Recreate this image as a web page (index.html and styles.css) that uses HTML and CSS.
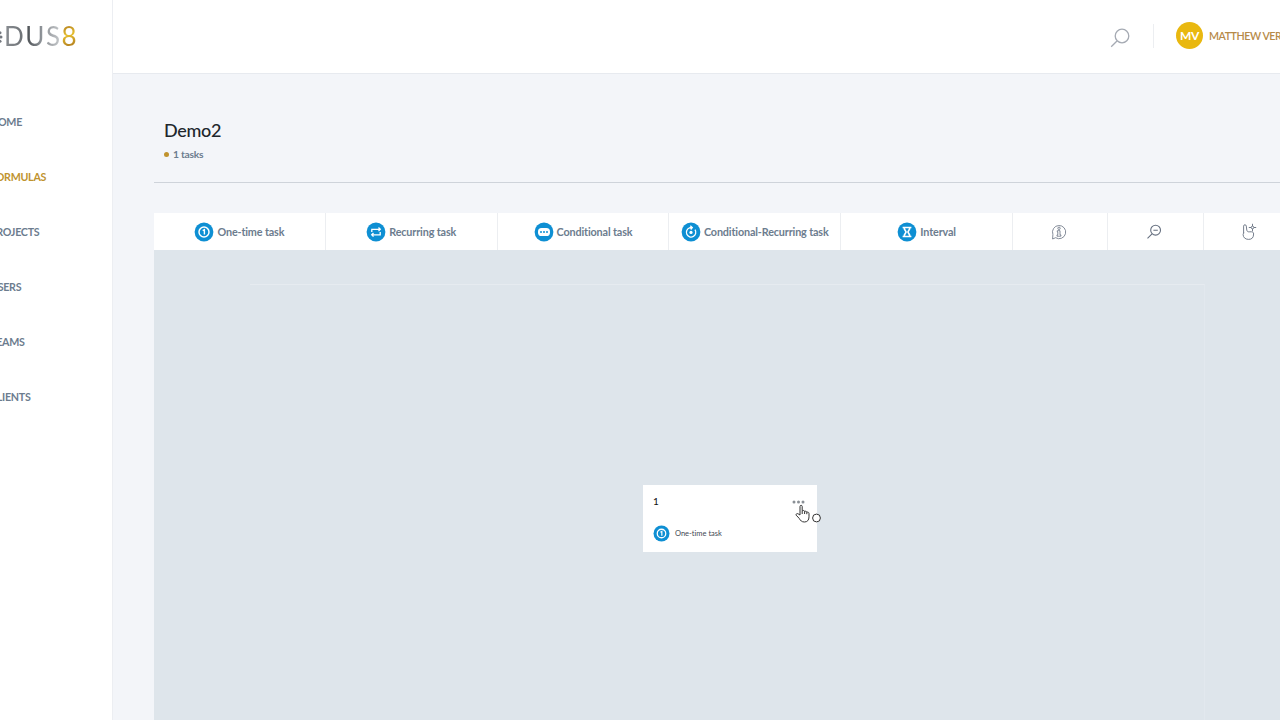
FILE: index.html
```html
<!DOCTYPE html>
<html lang="en">
<head>
  <meta charset="UTF-8" />
  <meta name="viewport" content="width=device-width, initial-scale=1.0" />
  <title>Demo2</title>
  <link rel="stylesheet" href="styles.css">
</head>
<body>
  <svg width="0" height="0" class="sprite">
    <symbol id="one-time" viewBox="0 0 20 20">
      <circle cx="10" cy="10" r="9.4" fill="#0e8fd3" />
      <circle cx="10" cy="10" r="5" fill="none" stroke="#fff" stroke-width="1.5" />
      <path d="M8.7 8.6l1.7-1v5" fill="none" stroke="#fff" stroke-width="1.4" />
    </symbol>
  </svg>
  <aside class="sidebar">
    <div class="logo">
      <svg class="logo-mark" width="4" height="16" viewBox="0 0 4 16"><circle cx="0" cy="3.8" r="1.5" /><circle cx="1" cy="8" r="1.5" /><circle cx="0" cy="12.2" r="1.5" /></svg>
      <span class="logo-d">D</span><span class="logo-u">U</span><span class="logo-s">S</span><span class="logo-8">8</span>
    </div>
    <nav class="menu">
      <a>HOME</a>
      <a class="active">FORMULAS</a>
      <a>PROJECTS</a>
      <a>USERS</a>
      <a>TEAMS</a>
      <a>CLIENTS</a>
    </nav>
  </aside>

  <main class="main">
    <header class="header">
      <svg class="search" width="20" height="20" viewBox="0 0 20 20"><circle cx="12" cy="8" r="6.8" /><path d="M7 13L1.2 18.8" /></svg>
      <div class="user">
        <span class="avatar">MV</span>
        <span class="user-name">MATTHEW VERNON</span>
      </div>
    </header>

    <section class="content">
      <div class="title-block">
        <h1>Demo2</h1>
        <div class="count">1 tasks</div>
      </div>

      <div class="toolbar">
        <div class="tool">
          <svg width="20" height="20"><use href="#one-time" /></svg>
          <span>One-time task</span>
        </div>
        <div class="tool">
          <svg width="20" height="20" viewBox="0 0 20 20"><circle cx="10" cy="10" r="9.4" fill="#0e8fd3" /><path class="line" d="M5.8 10V7.3h8M12.5 5.5l1.8 1.8-1.8 1.8M14.2 10v2.8h-8M7.5 11l-1.8 1.8 1.8 1.8" /></svg>
          <span>Recurring task</span>
        </div>
        <div class="tool">
          <svg width="20" height="20" viewBox="0 0 20 20"><circle cx="10" cy="10" r="9.4" fill="#0e8fd3" /><rect x="4" y="6" width="12" height="8" rx="3.6" fill="#fff" /><g fill="#0e8fd3"><circle cx="7" cy="10" r="1" /><circle cx="10" cy="10" r="1" /><circle cx="13" cy="10" r="1" /></g></svg>
          <span>Conditional task</span>
        </div>
        <div class="tool">
          <svg width="20" height="20" viewBox="0 0 20 20"><circle cx="10" cy="10" r="9.4" fill="#0e8fd3" /><path class="line" d="M14 7.7A4.7 4.7 0 1 1 8.5 5.9l2.2-.4M9.3 3.8l2 1.7-1.6 2" /><circle cx="10" cy="10.4" r="1.6" fill="#fff" /></svg>
          <span>Conditional-Recurring task</span>
        </div>
        <div class="tool">
          <svg width="20" height="20" viewBox="0 0 20 20"><circle cx="10" cy="10" r="9.4" fill="#0e8fd3" /><path class="line thick" d="M5.6 5.5h8.8M5.6 14.5h8.8M7.2 5.5c0 2.8 1.8 3.4 1.8 4.5s-1.8 1.7-1.8 4.5M12.8 5.5c0 2.8-1.8 3.4-1.8 4.5s1.8 1.7 1.8 4.5" /></svg>
          <span>Interval</span>
        </div>
        <div class="tool small">
          <svg class="outline info" width="16" height="16" viewBox="0 0 16 16"><path d="M1.6 15l.3-4.600A6.6 6.6 0 1 1 4.600 13.700z" /><circle cx="8" cy="4.300" r="1.200" /><path d="M6.300 6.700h2.700v4.200h.9v1.300H6v-1.300h.8V8h-.5z" /></svg>
        </div>
        <div class="tool small zoom-out">
          <svg class="outline" width="16" height="16" viewBox="0 0 16 16"><circle cx="9.6" cy="6.2" r="4.9" /><path d="M6 9.8L1.5 14.3M7.4 6.2h4.4" /></svg>
        </div>
        <div class="tool small">
          <svg class="outline hand" width="16" height="18" viewBox="0 0 16 18"><path d="M2.6 10V3.1c0-1.8 2.6-1.8 2.7 0l.5 4.2c.5 1.5 1.5 1.7 3 1.5h1.7c1.5 0 2.1.8 2.1 2.2 0 3.6-1.7 5.4-5 5.4-3.6 0-5.5-2.3-5.5-4.9 0-.8.3-1.3 1-1.5z" /><path d="M11.5.8v2.4M11.5 5.8v2.4M7.8 4.5h2.4M12.8 4.5h2.4" /><circle cx="11.5" cy="4.5" r="1.3" /></svg>
        </div>
      </div>

      <div class="canvas">
        <div class="grid-area"></div>
        <div class="card">
          <div class="card-top">
            <span>1</span>
            <svg width="13" height="4" viewBox="0 0 13 4"><circle cx="2" cy="2" r="1.5" /><circle cx="6.5" cy="2" r="1.5" /><circle cx="11" cy="2" r="1.5" /></svg>
          </div>
          <div class="card-type">
            <svg width="17" height="17"><use href="#one-time" /></svg>
            <span>One-time task</span>
          </div>
        </div>
        <svg class="cursor" width="27" height="20" viewBox="0 0 27 20"><path d="M5 11V2.5c0-1.6 2.2-1.6 2.2 0v4.3c1-.7 2.2-.3 2.4.6 1-.5 2-.1 2.2.8 1.1-.4 2.2.1 2.2 1.4v3.2c0 3.3-1.6 5.2-4.6 5.2-2.8 0-3.9-1.5-5.2-3.6L1.2 11.2c-.6-1.3 1-2.1 2-1.3zM7.2 7v3M9.600 7.400V10M11.800 8.200v2" /><circle cx="21.500" cy="14" r="3.900" /></svg>
      </div>
    </section>
  </main>
</body>
</html>
```
FILE: styles.css
```css
* {
  box-sizing: border-box;
}
body {
  margin: 0;
  height: 720px;
  display: flex;
  overflow: hidden;
  background: #f3f5f9;
  color: #6c7c8e;
  font-family: Lato, sans-serif;
  font-variant-ligatures: none;
}
svg {
  flex: none;
}
.sprite {
  position: absolute;
}
.sidebar {
  width: 113px;
  flex: none;
  overflow: hidden;
  background: #fff;
  border-right: 1px solid #eceef2;
}
.logo {
  display: flex;
  align-items: center;
  height: 73px;
  padding-bottom: 1px;
  font-size: 26px;
  font-weight: 400;
}
.logo-mark {
  margin-top: 2px;
  fill: #74787f;
}
.logo span {
  margin-right: 1.5px;
  color: transparent;
  background-clip: text;
  -webkit-background-clip: text;
}
.logo .logo-d {
  background-image: linear-gradient(90deg, #8b8f94, #6c7074);
}
.logo .logo-u {
  background-image: linear-gradient(90deg, #44484c, #9a9fa4);
}
.logo .logo-s {
  background-image: linear-gradient(90deg, #95999d, #c4c7ca);
}
.logo .logo-8 {
  background-image: linear-gradient(165deg, #b98722 20%, #e6bf30 45%, #b98722 75%);
}
.menu {
  display: flex;
  flex-direction: column;
  margin: 21px 0 0 -10px;
}
.menu a {
  height: 55px;
  line-height: 55px;
  font-size: 10.7px;
  font-weight: 700;
  letter-spacing: -.28px;
}
.menu .active {
  color: #c0932f;
}
.main {
  flex: 1;
  min-width: 0;
  display: flex;
  flex-direction: column;
}
.header {
  height: 74px;
  flex: none;
  display: flex;
  align-items: center;
  padding: 0 0 2px 997px;
  background: #fff;
  border-bottom: 1px solid #e7eaef;
}
.search {
  margin-top: 4px;
  fill: none;
  stroke: #a5aab3;
  stroke-width: 1.3;
}
.user {
  display: flex;
  align-items: center;
  height: 24px;
  margin-left: 23px;
  padding-left: 22px;
  border-left: 1px solid #eceef1;
  white-space: nowrap;
}
.avatar {
  width: 27px;
  height: 27px;
  border-radius: 50%;
  background: #e9b810;
  color: #fff;
  font-size: 12px;
  font-weight: 700;
  line-height: 27px;
  letter-spacing: -.4px;
  text-align: center;
}
.user-name {
  margin-left: 6px;
  font-size: 10.7px;
  font-weight: 600;
  letter-spacing: -.45px;
  color: #b68a48;
}
.content {
  flex: 1;
  display: flex;
  flex-direction: column;
  padding-left: 41px;
}
.title-block {
  height: 109px;
  padding: 45px 0 0 10px;
  border-bottom: 1px solid #ced3da;
}
h1 {
  margin: 0;
  color: #20262c;
  font-size: 18px;
  font-weight: 500;
  line-height: 22px;
  letter-spacing: -.3px;
}
.count {
  display: flex;
  align-items: center;
  margin-top: 6px;
  font-size: 10.3px;
  font-weight: 700;
  line-height: 14px;
  letter-spacing: -.25px;
}
.count::before {
  content: "";
  width: 5px;
  height: 5px;
  margin-right: 4px;
  border-radius: 50%;
  background: #c0932f;
}
.toolbar {
  display: flex;
  height: 37px;
  margin-top: 30px;
  background: #fff;
}
.tool {
  flex: none;
  width: 171.8px;
  display: flex;
  align-items: center;
  justify-content: center;
  gap: 3px;
  border-right: 1px solid #eceef1;
  font-size: 10.8px;
  font-weight: 700;
  letter-spacing: -.14px;
  white-space: nowrap;
}
.tool.small {
  width: 95.5px;
  padding-right: 2px;
}
.tool.zoom-out {
  padding-right: 3px;
}
.line {
  fill: none;
  stroke: #fff;
  stroke-width: 1.3;
}
.thick {
  stroke-width: 1.7;
}
.outline {
  fill: none;
  stroke: #667080;
  stroke-width: 1.1;
}
.info {
  stroke-width: .8;
}
.hand {
  margin-right: 3px;
  stroke-width: .9;
}
.canvas {
  position: relative;
  flex: 1;
  background: #dee5eb;
  overflow: hidden;
}
.grid-area {
  width: 955px;
  height: 100%;
  margin: 34px 0 0 96px;
  border-top: 1px solid #e6ebf0;
  border-right: 1px solid #e2e8ee;
}
.card {
  position: absolute;
  left: 489px;
  top: 235px;
  width: 174px;
  height: 67px;
  padding: 10px 12px 0 10px;
  background: #fff;
}
.card-top {
  display: flex;
  align-items: center;
  justify-content: space-between;
  height: 14px;
  color: #111;
  font-size: 10px;
}
.card-top span {
  padding-bottom: 2px;
}
.card-top svg {
  fill: #8b9096;
}
.card-type {
  display: flex;
  align-items: center;
  gap: 5px;
  margin-top: 16px;
  color: #3f4852;
  font-size: 7.5px;
}
.cursor {
  position: absolute;
  left: 641px;
  top: 254px;
  fill: #fff;
  stroke: #333;
  stroke-width: 1;
}
```
